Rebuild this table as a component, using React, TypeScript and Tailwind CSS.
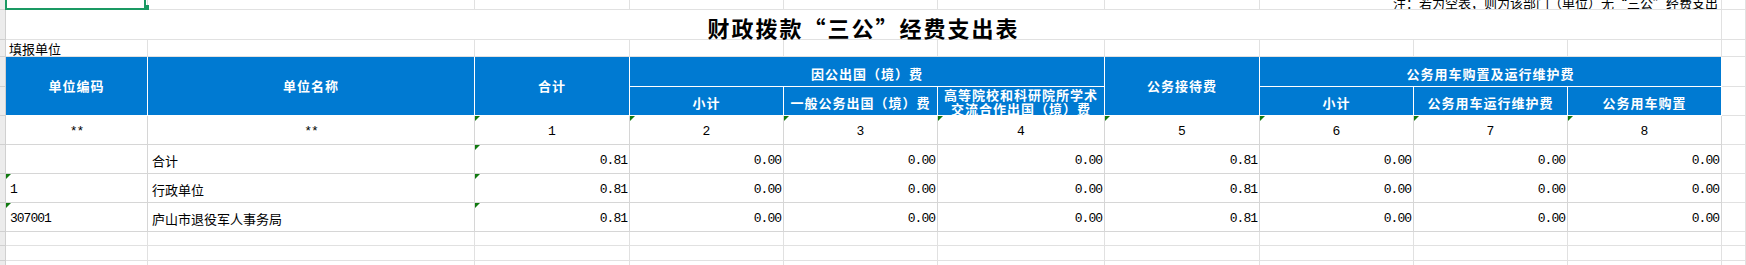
import type { ReactNode } from "react";

const values = ["0.81", "0.00", "0.00", "0.00", "0.81", "0.00", "0.00", "0.00"];

const rows = [
  { code: "", name: "合计", flagCode: false },
  { code: "1", name: "行政单位", flagCode: true },
  { code: "307001", name: "庐山市退役军人事务局", flagCode: true },
];

function Flag() {
  return (
    <span className="absolute left-0 top-0 h-0 w-0 border-t-[5px] border-r-[5px] border-t-[#117a11] border-r-transparent" />
  );
}

function Strip() {
  return <div className="border-r border-b border-[#d0d0d0] bg-[#ececec]" />;
}

function Grid({ children, className = "" }: { children?: ReactNode; className?: string }) {
  return (
    <div className={`relative border-r border-b border-[#e1e1e1] ${className}`}>{children}</div>
  );
}

function Cell({ children, className = "" }: { children?: ReactNode; className?: string }) {
  return (
    <div className={`relative flex items-center border-r border-b border-[#d6d6d6] pt-[3px] ${className}`}>
      {children}
    </div>
  );
}

function Head({ children, className = "" }: { children?: ReactNode; className?: string }) {
  return (
    <div
      className={`flex items-center justify-center border-r border-b border-white bg-[#007ad2] text-center text-[13px] font-bold leading-[14px] tracking-[1px] text-white ${className}`}
    >
      {children}
    </div>
  );
}

export default function App() {
  return (
    <div className="h-[265px] overflow-hidden bg-white font-['Noto_Sans_CJK_SC',sans-serif] text-[13px] text-black">
      <div className="grid grid-cols-[6px_142px_327px_155px_154px_154px_167px_155px_154px_154px_154px_1fr] grid-rows-[10px_30px_17px_30px_29px_29px_29px_29px_29px_14px_15px_15px_15px]">
        {/* row 1 */}
        <Strip />
        <Grid>
          <div className="absolute top-[-4px] right-[1px] bottom-[-1px] left-[-1px] z-10 border-2 border-[#1a9963]" />
          <div className="absolute right-[-2px] bottom-[-1px] z-10 h-[5px] w-[5px] bg-[#1a9963]" />
        </Grid>
        <Grid />
        <Grid />
        <Grid />
        <Grid />
        <Grid />
        <Grid />
        <div className="col-span-3 flex items-end justify-end overflow-hidden border-r border-b border-[#e1e1e1] pr-[3px]">
          <span className="whitespace-nowrap leading-[13px]">
            注：若为空表，则为该部门（单位）无“三公”经费支出
          </span>
        </div>
        <Grid />

        {/* row 2: title */}
        <Strip />
        <div className="col-span-10 flex items-center justify-center border-r border-b border-[#e1e1e1] pt-[4px]">
          <span className="text-[22px] font-bold leading-[24px] tracking-[2px]">
            财政拨款“三公”经费支出表
          </span>
        </div>
        <Grid />

        {/* row 3 */}
        <Strip />
        <Grid className="flex items-end pl-[3px]">
          <span className="leading-[15px]">填报单位</span>
        </Grid>
        <Grid />
        <Grid />
        <Grid />
        <Grid />
        <Grid />
        <Grid />
        <Grid />
        <Grid />
        <Grid />
        <Grid />

        {/* header */}
        <Strip />
        <Head className="row-span-2">单位编码</Head>
        <Head className="row-span-2">单位名称</Head>
        <Head className="row-span-2">合计</Head>
        <Head className="col-span-3 pt-[4px]">因公出国（境）费</Head>
        <Head className="row-span-2">公务接待费</Head>
        <Head className="col-span-3 pt-[4px]">公务用车购置及运行维护费</Head>
        <Grid />

        <Strip />
        <Head className="pt-[3px]">小计</Head>
        <Head className="pt-[3px]">一般公务出国（境）费</Head>
        <Head className="items-start overflow-hidden pt-[1px]">
          <span>
            高等院校和科研院所学术
            <br />
            交流合作出国（境）费
          </span>
        </Head>
        <Head className="pt-[3px]">小计</Head>
        <Head className="pt-[3px]">公务用车运行维护费</Head>
        <Head className="pt-[3px]">公务用车购置</Head>
        <Grid />

        {/* index row */}
        <Strip />
        <Cell className="justify-center font-['Liberation_Mono',monospace] tracking-[-1px]">**</Cell>
        <Cell className="justify-center font-['Liberation_Mono',monospace] tracking-[-1px]">**</Cell>
        {[1, 2, 3, 4, 5, 6, 7, 8].map((n) => (
          <Cell key={n} className="justify-center font-['Liberation_Mono',monospace]">
            <Flag />
            {n}
          </Cell>
        ))}
        <Grid />

        {/* data rows */}
        {rows.map((row) => (
          <div key={row.name} className="contents">
            <Strip />
            <Cell className="pl-[4px] font-['Liberation_Mono',monospace] tracking-[-1px]">
              {row.flagCode && <Flag />}
              {row.code}
            </Cell>
            <Cell className="pl-[4px]">{row.name}</Cell>
            {values.map((v, i) => (
              <Cell
                key={i}
                className="justify-end pr-[2px] font-['Liberation_Mono',monospace] tracking-[-1px]"
              >
                {i === 0 && <Flag />}
                {v}
              </Cell>
            ))}
            <Grid />
          </div>
        ))}

        {/* empty rows */}
        {[0, 1, 2].map((r) => (
          <div key={r} className="contents">
            <Strip />
            {Array.from({ length: 11 }).map((_, i) => (
              <Grid key={i} />
            ))}
          </div>
        ))}
      </div>
    </div>
  );
}
